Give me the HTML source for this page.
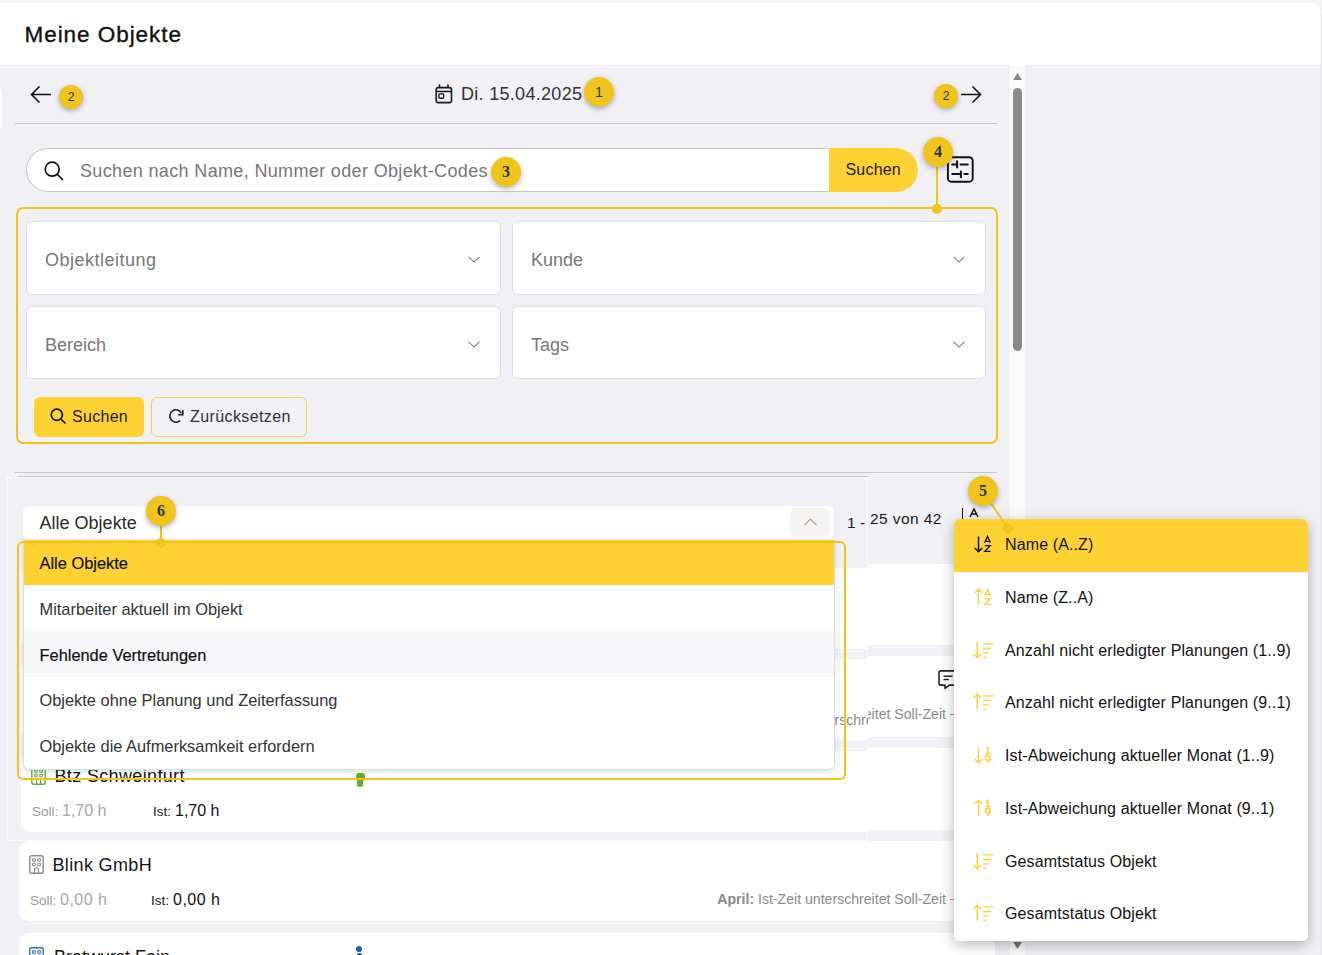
<!DOCTYPE html>
<html><head><meta charset="utf-8">
<style>
*{box-sizing:border-box;margin:0;padding:0}
html,body{width:1322px;height:955px;overflow:hidden;background:#f4f4f6;font-family:"Liberation Sans",sans-serif;color:#222;position:relative}
.a{position:absolute;line-height:1;white-space:nowrap}
.line{position:absolute;height:1px;background:#c6c6ca}
.badge{position:absolute;border-radius:50%;background:#f0c419;color:#2c3350;text-align:center;box-shadow:0 2px 5px rgba(40,40,90,.35)}
.b30{width:30px;height:30px;line-height:30px;font-size:15px}
.b24{width:24px;height:24px;line-height:24px;font-size:12px}
.sf{font-family:"Liberation Serif",serif;font-weight:bold;font-size:16px}
.dot{position:absolute;border-radius:50%;background:#f0c419}
.vl{position:absolute;background:#f0c419}
.sel{position:absolute;background:#fff;border:1px solid #dedee0;border-radius:6px}
.sel .t{position:absolute;left:18px;top:28px;font-size:18px;color:#777}
.sel svg{position:absolute;top:34px}
.card{position:absolute;background:#fff;border-radius:10px}
.mi{position:absolute;left:0;width:354px;height:52.75px}
.mi .t{position:absolute;left:51px;top:18px;font-size:16px;letter-spacing:0.12px;color:#111}
.mi svg{position:absolute;left:14px;top:13px}
.di{position:absolute;left:0;width:811px;height:45.8px}
.di .t{position:absolute;left:15.5px;top:15.6px;font-size:16.4px;color:#333}
</style></head><body>
<div class="a" style="left:0;top:3px;width:1322px;height:952px;background:#f0f0f5;border-top-right-radius:10px;overflow:hidden;border-right:1px solid #e2e2e6"><div class="a" style="left:0;top:0;width:1322px;height:62px;background:#fff"></div></div>
<div class="a" style="left:24.5px;top:24px;font-size:22.5px;letter-spacing:0.95px;color:#111;-webkit-text-stroke:0.35px #111">Meine Objekte</div>
<div class="a" style="left:-10px;top:86px;width:11.5px;height:45px;background:#fff;border-radius:6px"></div>
<svg class="a" style="left:30px;top:85px" width="22" height="19" viewBox="0 0 22 19"><path d="M1.5 9.5H21M9.5 1.5L1.5 9.5L9.5 17.5" fill="none" stroke="#111" stroke-width="1.6"/></svg>
<div class="badge b24" style="left:59px;top:85px">2</div>
<svg class="a" style="left:434px;top:83px" width="20" height="22" viewBox="0 0 20 22"><rect x="2.2" y="4.6" width="15.3" height="15" rx="2.2" fill="none" stroke="#1a1a1a" stroke-width="1.6"/><path d="M2.2 8.4H17.5M5.5 1.2v3.6M14 1.2v3.6" stroke="#1a1a1a" stroke-width="1.5"/><rect x="4.9" y="10.9" width="4.8" height="4.3" rx="1" fill="none" stroke="#1a1a1a" stroke-width="1.4"/></svg>
<div class="a" style="left:461px;top:84.7px;font-size:18px;letter-spacing:0.3px;color:#333">Di. 15.04.2025</div>
<div class="badge b30" style="left:584px;top:77px">1</div>
<div class="badge b24" style="left:934px;top:84px">2</div>
<svg class="a" style="left:960px;top:85px" width="23" height="19" viewBox="0 0 23 19"><path d="M1 9.5H20.5M12.5 1.5L20.5 9.5L12.5 17.5" fill="none" stroke="#111" stroke-width="1.6"/></svg>
<div class="line" style="left:15px;top:123px;width:982px"></div>
<div class="a" style="left:26px;top:148px;width:820px;height:44px;background:#fff;border:1px solid #c6c6c6;border-right:none;border-radius:22px 0 0 22px"></div>
<svg class="a" style="left:44px;top:161px" width="21" height="21" viewBox="0 0 21 21"><circle cx="8.2" cy="8.2" r="7" fill="none" stroke="#111" stroke-width="1.7"/><path d="M13.3 13.3L19 19" stroke="#111" stroke-width="1.7"/></svg>
<div class="a" style="left:80px;top:161.8px;font-size:18px;letter-spacing:0.35px;color:#777">Suchen nach Name, Nummer oder Objekt-Codes</div>
<div class="a" style="left:829px;top:148px;width:89px;height:44px;background:#ffd233;border-radius:0 22px 22px 0"></div>
<div class="a" style="left:845.5px;top:161.8px;font-size:16px;letter-spacing:0.2px;color:#1a1a1a">Suchen</div>
<div class="badge b30 sf" style="left:491px;top:157px">3</div>
<svg class="a" style="left:946px;top:156px" width="28" height="28" viewBox="0 0 28 28"><rect x="1.9" y="1.2" width="24.8" height="24.5" rx="3.5" fill="none" stroke="#111" stroke-width="1.9"/><path d="M6.2 8.5H11.1M11.1 5.2V11.5M14.5 8.5H21.8M6.2 18H14.9M14.9 15.4V21.3M18.3 18H21.8" stroke="#111" stroke-width="2" stroke-linecap="round"/></svg>
<div class="vl" style="left:936px;top:166px;width:2px;height:43px"></div>
<div class="dot" style="left:932px;top:204px;width:10px;height:10px"></div>
<div class="badge b30 sf" style="left:923px;top:137px">4</div>
<div class="a" style="left:16px;top:207px;width:982px;height:237px;border:2.5px solid #f0c419;border-radius:7px"></div>
<div class="sel" style="left:26px;top:221px;width:475px;height:74px"><div class="t" style="letter-spacing:0.5px">Objektleitung</div><svg style="left:441px" width="13" height="8" viewBox="0 0 13 8"><path d="M0.6 0.9L6 6.1L11.4 0.9" fill="none" stroke="#777" stroke-width="1.05"/></svg></div>
<div class="sel" style="left:512px;top:221px;width:474px;height:74px"><div class="t">Kunde</div><svg style="left:440px" width="13" height="8" viewBox="0 0 13 8"><path d="M0.6 0.9L6 6.1L11.4 0.9" fill="none" stroke="#777" stroke-width="1.05"/></svg></div>
<div class="sel" style="left:26px;top:306px;width:475px;height:73px"><div class="t">Bereich</div><svg style="left:441px" width="13" height="8" viewBox="0 0 13 8"><path d="M0.6 0.9L6 6.1L11.4 0.9" fill="none" stroke="#777" stroke-width="1.05"/></svg></div>
<div class="sel" style="left:512px;top:306px;width:474px;height:73px"><div class="t">Tags</div><svg style="left:440px" width="13" height="8" viewBox="0 0 13 8"><path d="M0.6 0.9L6 6.1L11.4 0.9" fill="none" stroke="#777" stroke-width="1.05"/></svg></div>
<div class="a" style="left:34px;top:397px;width:110px;height:40px;background:#ffd233;border-radius:6px"></div>
<svg class="a" style="left:50px;top:408px" width="17" height="17" viewBox="0 0 17 17"><circle cx="6.8" cy="6.8" r="5.6" fill="none" stroke="#111" stroke-width="1.7"/><path d="M10.8 10.8L15.5 15.5" stroke="#111" stroke-width="1.7"/></svg>
<div class="a" style="left:72px;top:409px;font-size:16px;letter-spacing:0.3px;color:#1a1a1a">Suchen</div>
<div class="a" style="left:151px;top:397px;width:156px;height:40px;border:1px solid #f3cf4e;border-radius:6px"></div>
<svg class="a" style="left:168px;top:408px" width="17" height="17" viewBox="0 0 17 17"><path d="M13.4 4.9A6.2 6.2 0 1 0 12.2 12.6" fill="none" stroke="#1e1e1e" stroke-width="1.6"/><path d="M14.8 2.1V6.7H10.2" fill="none" stroke="#1e1e1e" stroke-width="1.6"/></svg>
<div class="a" style="left:190px;top:409px;font-size:16px;letter-spacing:0.4px;color:#333">Zurücksetzen</div>
<div class="line" style="left:15px;top:472px;width:982px"></div>
<div class="a" style="left:870px;top:510.7px;font-size:15.5px;letter-spacing:0.4px;color:#1a1a1a">25 von 42</div>
<div class="a" style="left:961.5px;top:508px;width:1.6px;height:12px;background:#111"></div>
<svg class="a" style="left:968.5px;top:508px" width="11" height="11" viewBox="0 0 11 11"><path d="M1 9L5 0.9L9 9M2.5 6H7.5" fill="none" stroke="#111" stroke-width="1.4"/></svg>
<div class="card" style="left:19px;top:564px;width:976px;height:81px"></div>
<div class="card" style="left:19px;top:656px;width:976px;height:81px"></div>
<div class="card" style="left:19px;top:748px;width:976px;height:82px"></div>
<div class="card" style="left:19px;top:841px;width:976px;height:80px"></div>
<div class="card" style="left:19px;top:933px;width:976px;height:81px"></div>
<div class="a" style="left:29px;top:670px"><svg width="15" height="19" viewBox="0 0 15 19"><rect x="0.8" y="0.8" width="13.4" height="17.4" rx="1.8" fill="none" stroke="#8a8a8a" stroke-width="1.4"/><rect x="3.6" y="3.8" width="2.6" height="2.4" rx=".5" fill="none" stroke="#8a8a8a" stroke-width="1.1"/><rect x="8.8" y="3.8" width="2.6" height="2.4" rx=".5" fill="none" stroke="#8a8a8a" stroke-width="1.1"/><rect x="3.6" y="8.3" width="2.6" height="2.4" rx=".5" fill="none" stroke="#8a8a8a" stroke-width="1.1"/><rect x="8.8" y="8.3" width="2.6" height="2.4" rx=".5" fill="none" stroke="#8a8a8a" stroke-width="1.1"/><path d="M5.5 18.2v-3.4a2 2 0 0 1 4 0v3.4" fill="none" stroke="#8a8a8a" stroke-width="1.1"/></svg></div>
<div class="a" style="left:52.5px;top:670.8px;font-size:18px;letter-spacing:0.35px;color:#151515">Adler</div>
<div class="a" style="left:30px;top:708.6px;font-size:13.5px;color:#999">Soll:</div>
<div class="a" style="left:60px;top:706.6px;font-size:16px;letter-spacing:0.5px;color:#a6a6a6">0,00 h</div>
<div class="a" style="left:151px;top:708.6px;font-size:13.5px;color:#222">Ist:</div>
<div class="a" style="left:173px;top:706.6px;font-size:16px;letter-spacing:0.5px;color:#111">0,00 h</div>
<div class="a" style="right:376px;top:707.2px;font-size:14.1px;color:#8a8a8a"><b>April:</b> Ist-Zeit unterschreitet Soll-Zeit</div>
<div class="a" style="left:950px;top:714px;width:4px;height:1px;background:#e57080"></div>
<svg class="a" style="left:938px;top:670px" width="24" height="20" viewBox="0 0 24 20"><path d="M2.8 0.9H19.5A1.8 1.8 0 0 1 21.3 2.7V13.3A1.8 1.8 0 0 1 19.5 15.1H11.5L7 18.3V15.1H2.8A1.8 1.8 0 0 1 1 13.3V2.7A1.8 1.8 0 0 1 2.8 0.9Z" fill="none" stroke="#222" stroke-width="1.6" stroke-linejoin="round"/><path d="M5.5 6.3H14.5M5.5 9.5H10.8" stroke="#222" stroke-width="1.5"/></svg>
<div class="a" style="left:29px;top:855px"><svg width="15" height="19" viewBox="0 0 15 19"><rect x="0.8" y="0.8" width="13.4" height="17.4" rx="1.8" fill="none" stroke="#8a8a8a" stroke-width="1.4"/><rect x="3.6" y="3.8" width="2.6" height="2.4" rx=".5" fill="none" stroke="#8a8a8a" stroke-width="1.1"/><rect x="8.8" y="3.8" width="2.6" height="2.4" rx=".5" fill="none" stroke="#8a8a8a" stroke-width="1.1"/><rect x="3.6" y="8.3" width="2.6" height="2.4" rx=".5" fill="none" stroke="#8a8a8a" stroke-width="1.1"/><rect x="8.8" y="8.3" width="2.6" height="2.4" rx=".5" fill="none" stroke="#8a8a8a" stroke-width="1.1"/><path d="M5.5 18.2v-3.4a2 2 0 0 1 4 0v3.4" fill="none" stroke="#8a8a8a" stroke-width="1.1"/></svg></div>
<div class="a" style="left:52.5px;top:855.8px;font-size:18px;letter-spacing:0.35px;color:#151515">Blink GmbH</div>
<div class="a" style="left:30px;top:893.6px;font-size:13.5px;color:#999">Soll:</div>
<div class="a" style="left:60px;top:891.6px;font-size:16px;letter-spacing:0.5px;color:#a6a6a6">0,00 h</div>
<div class="a" style="left:151px;top:893.6px;font-size:13.5px;color:#222">Ist:</div>
<div class="a" style="left:173px;top:891.6px;font-size:16px;letter-spacing:0.5px;color:#111">0,00 h</div>
<div class="a" style="right:376px;top:892.2px;font-size:14.1px;color:#8a8a8a"><b>April:</b> Ist-Zeit unterschreitet Soll-Zeit</div>
<div class="a" style="left:950px;top:899px;width:4px;height:1px;background:#e57080"></div>
<div class="a" style="left:29px;top:947px"><svg width="15" height="19" viewBox="0 0 15 19"><rect x="0.8" y="0.8" width="13.4" height="17.4" rx="1.8" fill="none" stroke="#2a6fb5" stroke-width="1.4"/><rect x="3.6" y="3.8" width="2.6" height="2.4" rx=".5" fill="none" stroke="#2a6fb5" stroke-width="1.1"/><rect x="8.8" y="3.8" width="2.6" height="2.4" rx=".5" fill="none" stroke="#2a6fb5" stroke-width="1.1"/><rect x="3.6" y="8.3" width="2.6" height="2.4" rx=".5" fill="none" stroke="#2a6fb5" stroke-width="1.1"/><rect x="8.8" y="8.3" width="2.6" height="2.4" rx=".5" fill="none" stroke="#2a6fb5" stroke-width="1.1"/><path d="M5.5 18.2v-3.4a2 2 0 0 1 4 0v3.4" fill="none" stroke="#2a6fb5" stroke-width="1.1"/></svg></div>
<div class="a" style="left:54px;top:947.8px;font-size:18px;color:#151515">Bratwurst Fein</div>
<div class="a" style="left:356px;top:946px;width:6px;height:6px;border-radius:50%;background:#1a5fa8"></div><div class="a" style="left:356.5px;top:953px;width:5px;height:8px;border-radius:2px;background:#1a5fa8"></div>
<div class="a" style="left:1010px;top:65px;width:15px;height:890px;background:#fafafa"></div>
<svg class="a" style="left:1012px;top:72px" width="11" height="9" viewBox="0 0 11 9"><path d="M5.5 1L10 8H1Z" fill="#8a8a8a"/></svg>
<div class="a" style="left:1013px;top:88px;width:9px;height:263px;background:#8a8a8a;border-radius:4.5px"></div>
<svg class="a" style="left:1012px;top:941px" width="11" height="9" viewBox="0 0 11 9"><path d="M1 1H10L5.5 8Z" fill="#777"/></svg>
<div class="a" style="left:0;top:0;width:1322px;height:955px;clip-path:polygon(7px 476px,868px 476px,868px 841px,7px 841px)">
<div class="a" style="left:7px;top:477px;width:861px;height:364px;background:#f0f0f5;border:1px solid #fbfbfd"></div>
<div class="line" style="left:17px;top:476px;width:851px"></div>
<div class="a" style="left:22px;top:505px;width:813px;height:34px;background:#fff;border:1px solid #ededf0;border-radius:6px"></div>
<div class="a" style="left:39.6px;top:513.6px;font-size:18px;color:#2a2a2a">Alle Objekte</div>
<div class="a" style="left:790px;top:508px;width:40px;height:29px;background:#f6f4f2;border-radius:6px"></div>
<svg class="a" style="left:804px;top:518px" width="13" height="8" viewBox="0 0 13 8"><path d="M0.5 7.2L6.5 1.2L12.5 7.2" fill="none" stroke="#999" stroke-width="1.2"/></svg>
<div class="a" style="left:847px;top:514.8px;font-size:15.5px;color:#1a1a1a">1 -</div>
<div class="card" style="left:21px;top:568px;width:976px;height:81px"></div>
<div class="card" style="left:21px;top:659px;width:976px;height:81px"></div>
<div class="card" style="left:21px;top:751px;width:976px;height:81px"></div>
<div class="a" style="left:31px;top:676px"><svg width="15" height="19" viewBox="0 0 15 19"><rect x="0.8" y="0.8" width="13.4" height="17.4" rx="1.8" fill="none" stroke="#8a8a8a" stroke-width="1.4"/><rect x="3.6" y="3.8" width="2.6" height="2.4" rx=".5" fill="none" stroke="#8a8a8a" stroke-width="1.1"/><rect x="8.8" y="3.8" width="2.6" height="2.4" rx=".5" fill="none" stroke="#8a8a8a" stroke-width="1.1"/><rect x="3.6" y="8.3" width="2.6" height="2.4" rx=".5" fill="none" stroke="#8a8a8a" stroke-width="1.1"/><rect x="8.8" y="8.3" width="2.6" height="2.4" rx=".5" fill="none" stroke="#8a8a8a" stroke-width="1.1"/><path d="M5.5 18.2v-3.4a2 2 0 0 1 4 0v3.4" fill="none" stroke="#8a8a8a" stroke-width="1.1"/></svg></div>
<div class="a" style="left:54.5px;top:676.8px;font-size:18px;letter-spacing:0.35px;color:#151515">Adler</div>
<div class="a" style="left:32px;top:714.6px;font-size:13.5px;color:#999">Soll:</div>
<div class="a" style="left:62px;top:712.6px;font-size:16px;letter-spacing:0.5px;color:#a6a6a6">0,00 h</div>
<div class="a" style="left:153px;top:714.6px;font-size:13.5px;color:#222">Ist:</div>
<div class="a" style="left:175px;top:712.6px;font-size:16px;letter-spacing:0.5px;color:#111">0,00 h</div>
<div class="a" style="right:374px;top:713.2px;font-size:14.1px;color:#8a8a8a"><b>April:</b> Ist-Zeit unterschreitet Soll-Zeit</div>
<div class="a" style="left:952px;top:720px;width:4px;height:1px;background:#e57080"></div>
<svg class="a" style="left:940px;top:676px" width="24" height="20" viewBox="0 0 24 20"><path d="M2.8 0.9H19.5A1.8 1.8 0 0 1 21.3 2.7V13.3A1.8 1.8 0 0 1 19.5 15.1H11.5L7 18.3V15.1H2.8A1.8 1.8 0 0 1 1 13.3V2.7A1.8 1.8 0 0 1 2.8 0.9Z" fill="none" stroke="#222" stroke-width="1.6" stroke-linejoin="round"/><path d="M5.5 6.3H14.5M5.5 9.5H10.8" stroke="#222" stroke-width="1.5"/></svg>
<div class="a" style="left:31px;top:766.2px"><svg width="15" height="19" viewBox="0 0 15 19"><rect x="0.8" y="0.8" width="13.4" height="17.4" rx="1.8" fill="none" stroke="#6aaa3a" stroke-width="1.4"/><rect x="3.6" y="3.8" width="2.6" height="2.4" rx=".5" fill="none" stroke="#6aaa3a" stroke-width="1.1"/><rect x="8.8" y="3.8" width="2.6" height="2.4" rx=".5" fill="none" stroke="#6aaa3a" stroke-width="1.1"/><rect x="3.6" y="8.3" width="2.6" height="2.4" rx=".5" fill="none" stroke="#6aaa3a" stroke-width="1.1"/><rect x="8.8" y="8.3" width="2.6" height="2.4" rx=".5" fill="none" stroke="#6aaa3a" stroke-width="1.1"/><path d="M5.5 18.2v-3.4a2 2 0 0 1 4 0v3.4" fill="none" stroke="#6aaa3a" stroke-width="1.1"/></svg></div>
<div class="a" style="left:54.5px;top:767.0px;font-size:18px;letter-spacing:0.35px;color:#151515">Btz Schweinfurt</div>
<div class="a" style="left:32px;top:804.8000000000001px;font-size:13.5px;color:#999">Soll:</div>
<div class="a" style="left:62px;top:802.8000000000001px;font-size:16px;letter-spacing:0px;color:#a6a6a6">1,70 h</div>
<div class="a" style="left:153px;top:804.8000000000001px;font-size:13.5px;color:#222">Ist:</div>
<div class="a" style="left:175px;top:802.8000000000001px;font-size:16px;letter-spacing:0px;color:#111">1,70 h</div>
<div class="a" style="left:356px;top:772.7px;width:8.5px;height:8px;border-radius:3px;background:#6aaa2a"></div>
<div class="a" style="left:357px;top:778.2px;width:6px;height:8.5px;border-radius:3px;background:#6aaa2a"></div>
</div>
<div class="a" style="left:23px;top:539.5px;width:812px;height:230px;background:#fff;border:1px solid #dcdcdc;border-top:none;border-radius:0 0 6px 6px;box-shadow:0 2px 4px rgba(0,0,0,.12);overflow:hidden">
<div class="di" style="top:0.0px;background:#ffd233"><div class="t" style="color:#111;-webkit-text-stroke:0.2px #111">Alle Objekte</div></div>
<div class="di" style="top:45.8px;background:#fff"><div class="t" style="">Mitarbeiter aktuell im Objekt</div></div>
<div class="di" style="top:91.6px;background:#f7f7f9"><div class="t" style="color:#111;-webkit-text-stroke:0.2px #111">Fehlende Vertretungen</div></div>
<div class="di" style="top:137.39999999999998px;background:#fff"><div class="t" style="">Objekte ohne Planung und Zeiterfassung</div></div>
<div class="di" style="top:183.2px;background:#fff"><div class="t" style="">Objekte die Aufmerksamkeit erfordern</div></div>
</div>
<div class="a" style="left:17px;top:541px;width:829px;height:239px;border:2px solid #f0c419;border-radius:6px"></div>
<div class="vl" style="left:160px;top:524px;width:2px;height:18px"></div>
<div class="dot" style="left:156px;top:538px;width:10px;height:10px"></div>
<div class="badge b30 sf" style="left:146px;top:496px">6</div>
<div class="a" style="left:954px;top:519px;width:354px;height:422px;background:#fff;border-radius:6px;box-shadow:0 4px 14px rgba(0,0,0,.28);overflow:hidden">
<div class="mi" style="top:0.0px;background:#ffd233"><svg width="30" height="26" viewBox="0 0 30 26"><path d="M10.5 4.4V19.6M6.7 16L10.5 19.8L14.3 16" fill="none" stroke="#111" stroke-width="1.5"/><path d="M16.6 10.8L19.5 4.4L22.4 10.8M17.3 9.4H21.7M16.8 13.6H22.2L16.8 19.4H22.6" fill="none" stroke="#111" stroke-width="1.35"/></svg><div class="t">Name (A..Z)</div></div>
<div class="mi" style="top:52.75px;background:#fff"><svg width="30" height="26" viewBox="0 0 30 26"><path d="M10.5 19.6V4.4M6.7 8L10.5 4.2L14.3 8" fill="none" stroke="#fdd13a" stroke-width="1.5"/><path d="M16.6 10.8L19.5 4.4L22.4 10.8M17.3 9.4H21.7M16.8 13.6H22.2L16.8 19.4H22.6" fill="none" stroke="#fdd13a" stroke-width="1.35"/></svg><div class="t">Name (Z..A)</div></div>
<div class="mi" style="top:105.5px;background:#fff"><svg width="30" height="26" viewBox="0 0 30 26"><path d="M9.3 4.4V19.6M5.500000000000001 16L9.3 19.8L13.100000000000001 16" fill="none" stroke="#fdd13a" stroke-width="1.5"/><path d="M15 5.9H25.3M15 10.5H22.9M15 14.9H20.8M15 19.4H18.5" stroke="#fdd13a" stroke-width="1.4"/></svg><div class="t">Anzahl nicht erledigter Planungen (1..9)</div></div>
<div class="mi" style="top:158.25px;background:#fff"><svg width="30" height="26" viewBox="0 0 30 26"><path d="M9.3 19.6V4.4M5.500000000000001 8L9.3 4.2L13.100000000000001 8" fill="none" stroke="#fdd13a" stroke-width="1.5"/><path d="M15 5.9H25.3M15 10.5H22.9M15 14.9H20.8M15 19.4H18.5" stroke="#fdd13a" stroke-width="1.4"/></svg><div class="t">Anzahl nicht erledigter Planungen (9..1)</div></div>
<div class="mi" style="top:211.0px;background:#fff"><svg width="30" height="26" viewBox="0 0 30 26"><path d="M10.5 4.4V19.6M6.7 16L10.5 19.8L14.3 16" fill="none" stroke="#fdd13a" stroke-width="1.5"/><path d="M18 5.6L20 4.3V10.5M17.6 10.5H22.4" fill="none" stroke="#fdd13a" stroke-width="1.35"/><circle cx="19.8" cy="14.7" r="2.5" fill="none" stroke="#fdd13a" stroke-width="1.35"/><path d="M22.3 14.8C22.3 17.5 20.5 19 19 19.7" fill="none" stroke="#fdd13a" stroke-width="1.35"/></svg><div class="t">Ist-Abweichung aktueller Monat (1..9)</div></div>
<div class="mi" style="top:263.75px;background:#fff"><svg width="30" height="26" viewBox="0 0 30 26"><path d="M10.5 19.6V4.4M6.7 8L10.5 4.2L14.3 8" fill="none" stroke="#fdd13a" stroke-width="1.5"/><path d="M18 5.6L20 4.3V10.5M17.6 10.5H22.4" fill="none" stroke="#fdd13a" stroke-width="1.35"/><circle cx="19.8" cy="14.7" r="2.5" fill="none" stroke="#fdd13a" stroke-width="1.35"/><path d="M22.3 14.8C22.3 17.5 20.5 19 19 19.7" fill="none" stroke="#fdd13a" stroke-width="1.35"/></svg><div class="t">Ist-Abweichung aktueller Monat (9..1)</div></div>
<div class="mi" style="top:316.5px;background:#fff"><svg width="30" height="26" viewBox="0 0 30 26"><path d="M9.3 4.4V19.6M5.500000000000001 16L9.3 19.8L13.100000000000001 16" fill="none" stroke="#fdd13a" stroke-width="1.5"/><path d="M15 5.9H25.3M15 10.5H22.9M15 14.9H20.8M15 19.4H18.5" stroke="#fdd13a" stroke-width="1.4"/></svg><div class="t">Gesamtstatus Objekt</div></div>
<div class="mi" style="top:369.25px;background:#fff"><svg width="30" height="26" viewBox="0 0 30 26"><path d="M9.3 19.6V4.4M5.500000000000001 8L9.3 4.2L13.100000000000001 8" fill="none" stroke="#fdd13a" stroke-width="1.5"/><path d="M15 5.9H25.3M15 10.5H22.9M15 14.9H20.8M15 19.4H18.5" stroke="#fdd13a" stroke-width="1.4"/></svg><div class="t">Gesamtstatus Objekt</div></div>
</div>
<div class="vl" style="left:1006.6px;top:498px;width:2px;height:30px;transform:rotate(-34.5deg);transform-origin:50% 100%"></div>
<div class="dot" style="left:1003px;top:523.5px;width:9.5px;height:9.5px"></div>
<div class="badge b30 sf" style="left:968px;top:475.5px">5</div>
</body></html>
